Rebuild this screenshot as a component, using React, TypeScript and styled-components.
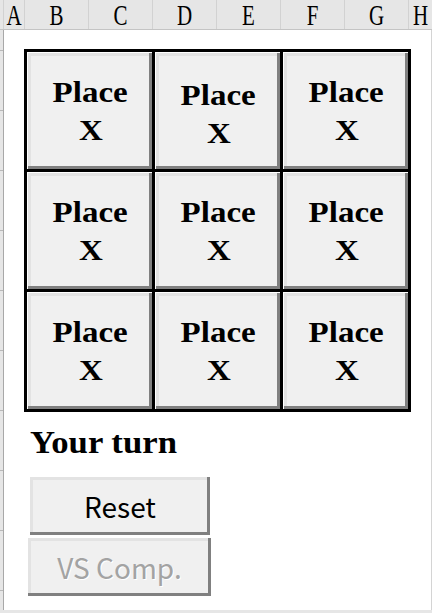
import React from "react";
import styled, { createGlobalStyle } from "styled-components";

const GlobalStyle = createGlobalStyle`
  html, body { margin: 0; padding: 0; background: #ffffff; overflow: hidden; }
  * { box-sizing: border-box; }
`;

const Frame = styled.div`
  width: 432px;
  height: 613px;
  display: grid;
  grid-template-columns: 4px 1fr 1px;
  grid-template-rows: 30px 1fr 3px;
  background: #ffffff;
`;

const ColumnHeader = styled.div`
  grid-column: 1 / -1;
  display: grid;
  grid-template-columns: 4px 21px repeat(6, 64px) 1fr;
  background: #e6e6e6;
  border-bottom: 1px solid #c4c4c4;
`;

const HeaderCell = styled.div`
  display: flex;
  align-items: center;
  justify-content: center;
  border-right: 1px solid #d2d2d2;
  &:last-child { border-right: none; }
`;

const HeaderLetter = styled.span`
  display: inline-block;
  font-family: "Liberation Serif", serif;
  font-size: 21px;
  line-height: 16px;
  color: #000;
  transform: scaleY(1.38);
`;

const RowHeader = styled.div`
  background-color: #e6e6e6;
  background-image: linear-gradient(#b8b8b8 0 1px, transparent 1px);
  background-size: 100% 60px;
  background-position: 0 20px;
  border-right: 1px solid #a8a8a8;
`;

const Content = styled.div`
  padding: 19px 0 0 20px;
  display: flex;
  flex-direction: column;
  align-items: flex-start;
`;

const RightEdge = styled.div`
  background: #d4d4d4;
`;

const BottomEdge = styled.div`
  grid-column: 1 / -1;
  background: #e6e6e6;
`;

const Board = styled.div`
  display: grid;
  grid-template-columns: repeat(3, 125px);
  grid-template-rows: repeat(3, 117px);
  gap: 3px;
  border: 3px solid #000;
  background: #000;
`;

const Cell = styled.button<{ $pressed?: boolean }>`
  margin: 0;
  padding: ${(p) => (p.$pressed ? "5px 0 0 1px" : "0 0 0 1px")};
  border: none;
  border-top: 1px solid #ffffff;
  border-left: 1px solid #ffffff;
  background: #f0f0f0;
  box-shadow: inset -3px -3px 0 #808080, inset 3px 3px 0 #e3e3e3;
  font-family: "Liberation Serif", serif;
  font-weight: bold;
  font-size: 30px;
  line-height: 38px;
  color: #000;
  display: flex;
  flex-direction: column;
  align-items: center;
  justify-content: center;
`;

const CellLine = styled.span`
  display: inline-block;
  transform: scaleX(1.1);
`;

const Status = styled.div`
  margin: 11px 0 0 6px;
  font-family: "Liberation Serif", serif;
  font-weight: bold;
  font-size: 31px;
  line-height: 40px;
  color: #000;
  transform: scaleX(1.12);
  transform-origin: left center;
`;

const ActionButton = styled.button<{ $disabled?: boolean; $width: number; $offset: number }>`
  margin: 0 0 0 ${(p) => p.$offset}px;
  width: ${(p) => p.$width}px;
  height: 58px;
  padding: 0;
  border: none;
  background: #f0f0f0;
  box-shadow: inset -3px -3px 0 #808080, inset 3px 3px 0 #e3e3e3;
  font-family: "Noto Sans CJK SC", "Open Sans", sans-serif;
  font-size: 28px;
  color: ${(p) => (p.$disabled ? "#a3a3a3" : "#000")};
  text-shadow: ${(p) => (p.$disabled ? "1px 1px 0 #ffffff" : "none")};
  display: flex;
  align-items: center;
  justify-content: center;
`;

const Buttons = styled.div`
  margin-top: 14px;
  display: flex;
  flex-direction: column;
  gap: 3px;
`;

const columns = ["", "A", "B", "C", "D", "E", "F", "G", "H"];

export default function App() {
  return (
    <>
      <GlobalStyle />
      <Frame>
        <ColumnHeader>
          {columns.map((c, i) => (
            <HeaderCell key={i}>{c && <HeaderLetter>{c}</HeaderLetter>}</HeaderCell>
          ))}
        </ColumnHeader>
        <RowHeader />
        <Content>
          <Board>
            {Array.from({ length: 9 }).map((_, i) => (
              <Cell key={i} $pressed={i === 1}>
                <CellLine>Place</CellLine>
                <CellLine>X</CellLine>
              </Cell>
            ))}
          </Board>
          <Status>Your turn</Status>
          <Buttons>
            <ActionButton $width={180} $offset={6}>Reset</ActionButton>
            <ActionButton $width={183} $offset={4} $disabled disabled>
              VS Comp.
            </ActionButton>
          </Buttons>
        </Content>
        <RightEdge />
        <BottomEdge />
      </Frame>
    </>
  );
}
